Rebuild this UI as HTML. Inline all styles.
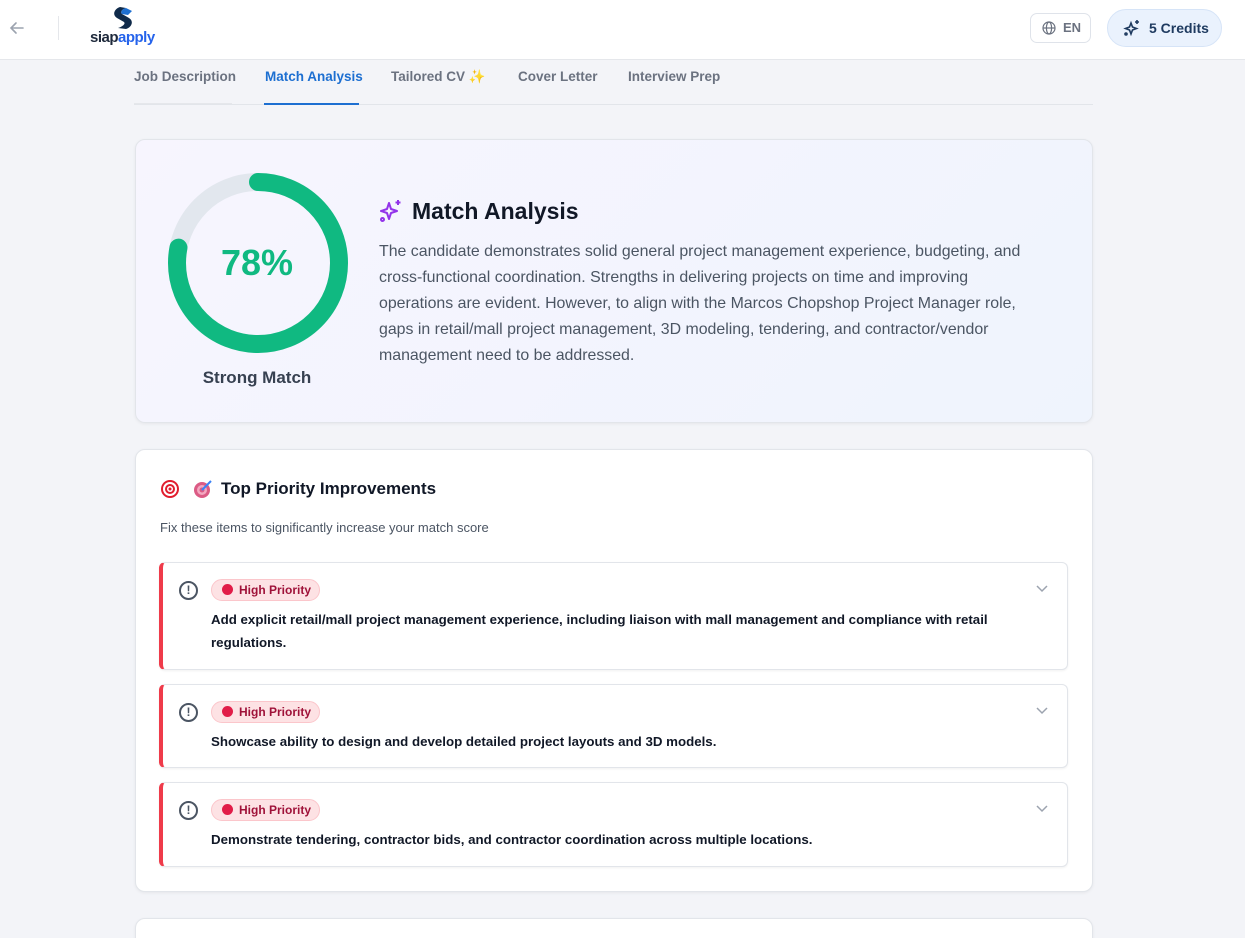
<!DOCTYPE html>
<html><head><meta charset="utf-8"><style>
*{box-sizing:border-box;margin:0;padding:0}
html,body{width:1245px;height:938px;overflow:hidden}
body{background:#f3f4f8;font-family:"Liberation Sans",sans-serif;position:relative;color:#1f2937}
.hdr{position:absolute;left:0;top:0;width:1245px;height:60px;background:#fff;border-bottom:1px solid #e5e7eb}
.abs{position:absolute}
.tab{position:absolute;top:69px;font-size:13.5px;font-weight:bold;color:#6b7280}
.card{position:absolute;left:135px;width:958px;background:#fff;border:1px solid #e2e5ea;border-radius:10px;box-shadow:0 1px 3px rgba(0,0,0,.06)}
.item{position:absolute;left:159px;width:909px;background:#fff;border:1px solid #e2e5ea;border-left:4px solid #ef3b4a;border-radius:6px;box-shadow:0 1px 2px rgba(0,0,0,.06)}
.badge{position:absolute;left:48px;top:16px;height:22px;padding:0 8px 0 10px;background:#fde2e4;border:1px solid #fbc6cb;border-radius:11px;font-size:12px;font-weight:bold;color:#9f1239;line-height:20px}
.badge i{display:inline-block;width:11px;height:11px;border-radius:50%;background:#e11d48;vertical-align:-1px;margin-right:6px}
.ex{position:absolute;left:16px;top:18px;width:19px;height:19px;border:2px solid #4b5563;border-radius:50%;font-size:12px;font-weight:bold;text-align:center;line-height:15px;color:#4b5563}
.txt{position:absolute;left:48px;font-size:13.3px;font-weight:bold;color:#111827;line-height:23px;width:840px}
.chev{position:absolute;right:18px;top:18px}
</style></head><body>
<div class="hdr">
<svg class="abs" style="left:8px;top:19px" width="18" height="18" viewBox="0 0 18 18"><path d="M15 9H3M8 4L3 9l5 5" stroke="#9ca3af" stroke-width="1.6" fill="none" stroke-linecap="round"/></svg>
<div class="abs" style="left:58px;top:16px;width:1px;height:24px;background:#e5e7eb"></div>
<svg class="abs" style="left:106px;top:5px" width="34" height="26" viewBox="0 0 34 26"><path d="M14 2C8 4 6 10 11 13L18 17C20 19 16 22 12 23L20 24C26 22 28 16 23 13L16 9C14 7 16 4 20 3Z" fill="#0f2a4a"/><path d="M20 3L26 6 22 10 16 9C14 7 16 4 20 3Z" fill="#1d6fd1"/></svg>
<div class="abs" style="left:90px;top:29px;font-size:15px;font-weight:bold;color:#1e293b;letter-spacing:-.5px">siap<span style="color:#2563eb">apply</span></div>
<div class="abs" style="left:1030px;top:13px;width:61px;height:30px;border:1px solid #dfe3ea;border-radius:7px;font-size:13px;font-weight:bold;color:#6b7280;line-height:28px;padding-left:32px">EN</div>
<svg class="abs" style="left:1042px;top:21px" width="14" height="14" viewBox="0 0 14 14" fill="none" stroke="#6b7280" stroke-width="1.2"><circle cx="7" cy="7" r="6"/><ellipse cx="7" cy="7" rx="2.6" ry="6"/><path d="M1 7h12"/></svg>
<div class="abs" style="left:1107px;top:9px;width:115px;height:38px;background:#eaf2fd;border:1px solid #d6e4f7;border-radius:19px;font-size:14px;font-weight:bold;color:#1e3a5f;line-height:36px;padding-left:41px">5 Credits</div>
<svg class="abs" style="left:1123px;top:19px" width="18" height="18" viewBox="0 0 18 18" fill="none" stroke="#1e3a5f" stroke-width="1.6"><path d="M8 4l1.5 4 4 1.5-4 1.5L8 15l-1.5-4-4-1.5 4-1.5z"/><path d="M14 1v4M12 3h4"/><circle cx="3" cy="15" r="1"/></svg>
</div>
<div class="tab" style="left:134px">Job Description</div>
<div class="abs" style="left:134px;top:103px;width:98px;height:2px;background:#e5e7eb"></div>
<div class="tab" style="left:265px;color:#1d6fd1">Match Analysis</div>
<div class="tab" style="left:391px">Tailored CV ✨</div>
<div class="tab" style="left:518px">Cover Letter</div>
<div class="tab" style="left:628px">Interview Prep</div>
<div class="abs" style="left:134px;top:104px;width:959px;height:1px;background:#e2e5ea"></div>
<div class="abs" style="left:264px;top:103px;width:95px;height:2px;background:#1d6fd1"></div>

<div class="card" style="top:139px;height:284px;background:linear-gradient(135deg,#f7f5fe,#eff4fd)">
<svg class="abs" style="left:31px;top:32px" width="182" height="182" viewBox="0 0 182 182"><circle cx="91" cy="91" r="81" fill="none" stroke="#e2e7ee" stroke-width="18"/><circle cx="91" cy="91" r="81" fill="none" stroke="#10b981" stroke-width="18" stroke-linecap="round" stroke-dasharray="397 509" transform="rotate(-90 91 91)"/></svg>
<div class="abs" style="left:30px;top:102px;width:182px;text-align:center;font-size:36px;font-weight:bold;color:#10b981">78%</div>
<div class="abs" style="left:30px;top:228px;width:182px;text-align:center;font-size:17px;font-weight:bold;color:#374151">Strong Match</div>
<svg class="abs" style="left:243px;top:59px" width="24" height="24" viewBox="0 0 24 24" fill="none" stroke="#9333ea" stroke-width="2" stroke-linejoin="round"><path d="M10 4l2 6 6 2-6 2-2 6-2-6-6-2 6-2z"/><path d="M19 1v5M16.5 3.5h5"/><circle cx="3.5" cy="20.5" r="1.5"/></svg>
<div class="abs" style="left:276px;top:58px;font-size:23px;font-weight:bold;color:#111827">Match Analysis</div>
<div class="abs" style="left:243px;top:99px;white-space:nowrap;font-size:15.9px;line-height:26px;color:#4b5563">The candidate demonstrates solid general project management experience, budgeting, and<br>cross-functional coordination. Strengths in delivering projects on time and improving<br>operations are evident. However, to align with the Marcos Chopshop Project Manager role,<br>gaps in retail/mall project management, 3D modeling, tendering, and contractor/vendor<br>management need to be addressed.</div>
</div>

<div class="card" style="top:449px;height:443px">
<svg class="abs" style="left:24px;top:29px" width="20" height="20" viewBox="0 0 20 20"><circle cx="10" cy="10" r="9" fill="#e11d2e"/><circle cx="10" cy="10" r="7" fill="#fff"/><circle cx="10" cy="10" r="5" fill="#e11d2e"/><circle cx="10" cy="10" r="3" fill="#fff"/><circle cx="10" cy="10" r="1.5" fill="#e11d2e"/></svg>
<svg class="abs" style="left:57px;top:29px" width="20" height="20" viewBox="0 0 20 20"><circle cx="9" cy="11" r="8" fill="#db5b85"/><circle cx="9" cy="11" r="5" fill="#f3a8c0"/><circle cx="9" cy="11" r="2.5" fill="#db5b85"/><path d="M9 11L18 2" stroke="#3b82f6" stroke-width="2"/></svg>
<div class="abs" style="left:85px;top:29px;font-size:17px;font-weight:bold;color:#111827">Top Priority Improvements</div>
<div class="abs" style="left:24px;top:70px;font-size:13px;color:#4b5563">Fix these items to significantly increase your match score</div>
</div>

<div class="item" style="top:562px;height:108px"><div class="ex">!</div><div class="badge"><i></i>High Priority</div><svg class="chev" width="14" height="14" viewBox="0 0 14 14"><path d="M2 5l5 5 5-5" stroke="#9ca3af" stroke-width="1.5" fill="none"/></svg><div class="txt" style="top:45px">Add explicit retail/mall project management experience, including liaison with mall management and compliance with retail<br>regulations.</div></div>
<div class="item" style="top:684px;height:84px"><div class="ex">!</div><div class="badge"><i></i>High Priority</div><svg class="chev" width="14" height="14" viewBox="0 0 14 14"><path d="M2 5l5 5 5-5" stroke="#9ca3af" stroke-width="1.5" fill="none"/></svg><div class="txt" style="top:45px">Showcase ability to design and develop detailed project layouts and 3D models.</div></div>
<div class="item" style="top:782px;height:85px"><div class="ex">!</div><div class="badge"><i></i>High Priority</div><svg class="chev" width="14" height="14" viewBox="0 0 14 14"><path d="M2 5l5 5 5-5" stroke="#9ca3af" stroke-width="1.5" fill="none"/></svg><div class="txt" style="top:45px">Demonstrate tendering, contractor bids, and contractor coordination across multiple locations.</div></div>

<div class="card" style="top:918px;height:60px"></div>
</body></html>
